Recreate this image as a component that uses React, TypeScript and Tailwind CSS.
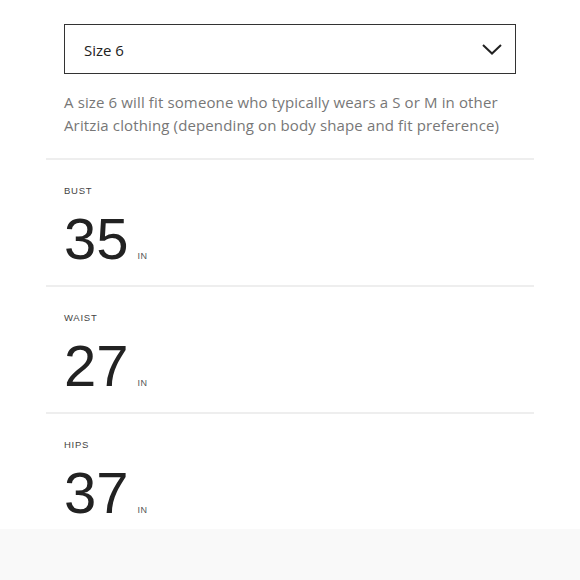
import React from "react";

const sections = [
  { label: "BUST", value: "35", last: false },
  { label: "WAIST", value: "27", last: false },
  { label: "HIPS", value: "37", last: true },
];

export default function App() {
  return (
    <div
      className="w-[580px] h-[580px] bg-white flex flex-col overflow-hidden"
      style={{ fontFamily: '"Liberation Sans", Arial, sans-serif' }}
    >
      <div className="px-[46px]">
        <div className="px-[18px] pt-[24px] pb-[21px]">
          <div className="h-[50px] border-[1.5px] border-[#333] flex items-center justify-between pl-[19px] pr-[13px]">
            <span
              className="text-[15px] text-[#222] pt-[2px]"
              style={{ fontFamily: '"Open Sans", sans-serif' }}
            >
              Size 6
            </span>
            <svg width="20" height="11" viewBox="0 0 20 11" fill="none">
              <polyline points="1,1 10,9.5 19,1" stroke="#222" strokeWidth="2" />
            </svg>
          </div>
          <p
            className="mt-[17px] text-[15px] leading-[23px] tracking-[0.13px] text-[#777]"
            style={{ fontFamily: '"Open Sans", sans-serif' }}
          >
            A size 6 will fit someone who typically wears a S or M in other Aritzia clothing (depending on body shape and fit preference)
          </p>
        </div>
        {sections.map((s) => (
          <div
            key={s.label}
            className={
              s.last
                ? "border-t-2 border-[#eeeeee] px-[18px] pt-[25px] pb-[7px]"
                : "border-t-2 border-[#eeeeee] px-[18px] pt-[25px] pb-[17px]"
            }
          >
            <div className="text-[9.5px] leading-[12px] tracking-[0.08em] text-[#444]">{s.label}</div>
            <div className="mt-[13px] flex items-baseline">
              <span className="text-[58px] leading-[58px] text-[#222]">{s.value}</span>
              <span className="ml-[9px] text-[9px] tracking-[0.05em] text-[#555]">IN</span>
            </div>
          </div>
        ))}
      </div>
      <div className="flex-1 bg-[#f9f9f9]" />
    </div>
  );
}
